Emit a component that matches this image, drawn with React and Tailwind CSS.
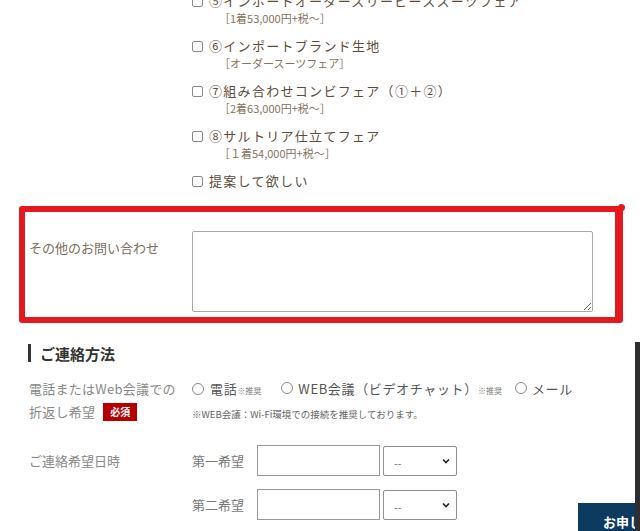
import React from 'react'

const ITEMS = [
  { label: '⑤インポートオーダースリーピーススーツフェア', sub: '［1着53,000円+税～］' },
  { label: '⑥インポートブランド生地', sub: '［オーダースーツフェア］' },
  { label: '⑦組み合わせコンビフェア（①＋②）', sub: '［2着63,000円+税～］' },
  { label: '⑧サルトリア仕立てフェア', sub: '［１着54,000円+税～］' },
  { label: '提案して欲しい' },
]

function Check() {
  return <span className="inline-block w-[11px] h-[11px] border border-[#8a8a8a] rounded-[2px] bg-white shrink-0" />
}

function Radio() {
  return <span className="inline-block w-[12px] h-[12px] border border-[#8a8a8a] rounded-full bg-white shrink-0" />
}

function Select() {
  return (
    <div className="w-[74px] h-[30px] border border-[#8f8f8f] rounded-[2px] bg-white flex items-center justify-between pl-[10px] pr-[6px]">
      <span className="text-[11px] text-[#777] mt-[6px]">--</span>
      <svg width="8" height="6" viewBox="0 0 8 6">
        <path d="M1 1.5 L4 4.5 L7 1.5" fill="none" stroke="#222" strokeWidth="1.6" />
      </svg>
    </div>
  )
}

function DateRow({ label, title }) {
  return (
    <div className="flex items-center pl-[29px]">
      <div className="w-[163px] text-[13px] text-[#888]">{label}</div>
      <div className="w-[65px] text-[13px] text-[#777]">{title}</div>
      <div className="w-[123px] h-[31px] border border-[#999] bg-white mr-[3px]" />
      <Select />
    </div>
  )
}

export default function App() {
  return (
    <div className="relative w-[640px] h-[531px] overflow-hidden bg-white font-['Noto_Sans_CJK_JP',sans-serif]">
      <div className="mt-[-8px] pl-[192px]">
        {ITEMS.map((it, i) => (
          <div key={i} className={it.sub ? 'mb-[11px]' : ''}>
            <div className="flex items-center gap-[6px] h-[18px] text-[13px] tracking-[0.1em] text-[#5e4c3a] whitespace-nowrap">
              <Check />
              <span>{it.label}</span>
            </div>
            {it.sub && (
              <div className="pl-[27px] h-[16px] leading-[16px] text-[11px] text-[#86725e] whitespace-nowrap">{it.sub}</div>
            )}
          </div>
        ))}
      </div>

      <div className="relative mt-[16px] ml-[19px] w-[604px] h-[117px] border-[6px] border-r-[8px] border-[#e4191f] rounded-[3px] flex pl-[4px] pt-[19px]">
        <div className="w-[163px] pt-[7px] text-[13px] text-[#7d6e60]">その他のお問い合わせ</div>
        <textarea className="w-[401px] h-[81px] border border-[#a9a9a9] rounded-[2px] bg-white outline-none" />
        <span className="absolute right-[-10px] top-[-8px] w-[7px] h-[7px] rounded-full bg-[#e4191f]" />
      </div>

      <div className="mt-[21px] ml-[28px] flex items-center gap-[9px]">
        <span className="w-[3px] h-[18px] bg-[#333]" />
        <span className="text-[15px] font-bold text-[#333] leading-none">ご連絡方法</span>
      </div>

      <div className="mt-[15px] flex pl-[29px]">
        <div className="w-[163px] text-[13px] leading-[23px] text-[#888] tracking-[0.02em]">
          <div>電話またはWeb会議での</div>
          <div className="flex items-center gap-[8px]">
            折返し希望
            <span className="bg-[#b40000] text-white text-[10px] font-bold leading-none px-[7px] py-[4px] tracking-normal">必須</span>
          </div>
        </div>
        <div>
          <div className="flex items-center h-[23px] text-[13px] text-[#555] whitespace-nowrap tracking-[0.05em]">
            <Radio />
            <span className="ml-[6px]">電話</span>
            <span className="text-[8px] text-[#777] mt-[4px] tracking-normal">※推奨</span>
            <span className="ml-[20px]"><Radio /></span>
            <span className="ml-[5px]">WEB会議（ビデオチャット）</span>
            <span className="text-[8px] text-[#777] mt-[4px] tracking-normal">※推奨</span>
            <span className="ml-[13px]"><Radio /></span>
            <span className="ml-[5px]">メール</span>
          </div>
          <div className="mt-[7px] text-[9.5px] leading-[14px] text-[#666] whitespace-nowrap">※WEB会議：Wi-Fi環境での接続を推奨しております。</div>
        </div>
      </div>

      <div className="mt-[22px]">
        <DateRow label="ご連絡希望日時" title="第一希望" />
      </div>
      <div className="mt-[13px]">
        <DateRow label="" title="第二希望" />
      </div>

      <div className="absolute left-[578px] top-[503px] w-[120px] h-[40px] bg-[#0d3a5f] text-white text-[13px] font-bold pl-[25px] pt-[9px] whitespace-nowrap">お申し込み</div>
      <div className="absolute right-0 top-[342px] w-[5px] h-[200px] bg-[#2e2e2e]" />
    </div>
  )
}
